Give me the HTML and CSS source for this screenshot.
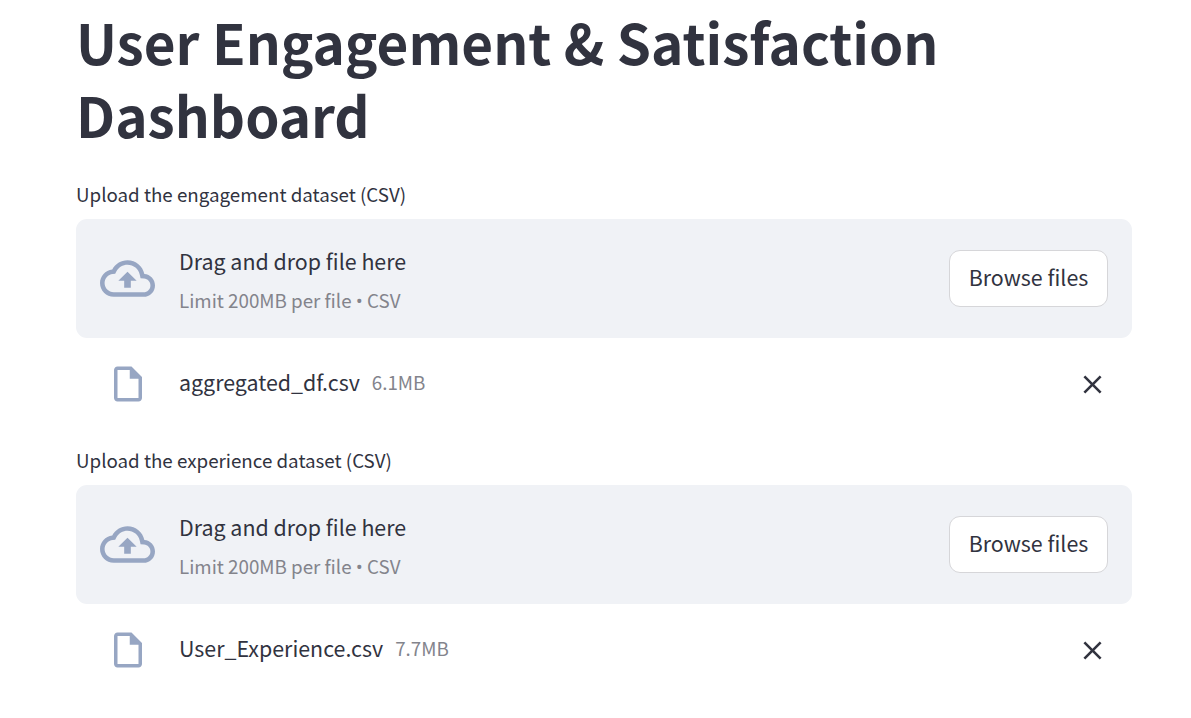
FILE: index.html
```html
<!DOCTYPE html>
<html lang="en">
<head>
  <meta charset="UTF-8">
  <title>User Engagement &amp; Satisfaction Dashboard</title>
  <link rel="stylesheet" href="styles.css">
</head>
<body>
  <main class="main">
    <h1 class="title">User Engagement &amp; Satisfaction Dashboard</h1>

    <section class="uploader">
      <label class="uploader-label">Upload the engagement dataset (CSV)</label>
      <div class="dropzone">
        <svg class="cloud-icon" viewBox="0 0 24 24"><path d="M19.35 10.04C18.67 6.59 15.64 4 12 4 9.11 4 6.6 5.64 5.35 8.04 2.34 8.36 0 10.91 0 14c0 3.31 2.69 6 6 6h13c2.76 0 5-2.24 5-5 0-2.64-2.05-4.78-4.65-4.96zM19 18H6c-2.21 0-4-1.79-4-4 0-2.05 1.53-3.76 3.56-3.97l1.07-.11.5-.95C8.08 7.14 9.94 6 12 6c2.62 0 4.88 1.86 5.39 4.43l.3 1.5 1.53.11c1.56.1 2.78 1.41 2.78 2.96 0 1.65-1.35 3-3 3zM8 13h2.55v3h2.9v-3H16l-4-4z"/></svg>
        <div class="drop-text">
          <span class="drop-title">Drag and drop file here</span>
          <small class="drop-limit">Limit 200MB per file <span class="bullet">•</span> CSV</small>
        </div>
        <button class="browse-btn">Browse files</button>
      </div>
      <div class="file-row">
        <svg class="file-icon" viewBox="0 0 24 24"><path d="M14 2H6c-1.1 0-1.99.9-1.99 2L4 20c0 1.1.89 2 1.99 2H18c1.1 0 2-.9 2-2V8l-6-6zM6 20V4h7v5h5v11H6z"/></svg>
        <span class="file-name">aggregated_df.csv</span>
        <small class="file-size">6.1MB</small>
        <svg class="close-icon" viewBox="0 0 24 24"><path d="M19 6.41L17.59 5 12 10.59 6.41 5 5 6.41 10.59 12 5 17.59 6.41 19 12 13.41 17.59 19 19 17.59 13.41 12z"/></svg>
      </div>
    </section>

    <section class="uploader">
      <label class="uploader-label">Upload the experience dataset (CSV)</label>
      <div class="dropzone">
        <svg class="cloud-icon" viewBox="0 0 24 24"><path d="M19.35 10.04C18.67 6.59 15.64 4 12 4 9.11 4 6.6 5.64 5.35 8.04 2.34 8.36 0 10.91 0 14c0 3.31 2.69 6 6 6h13c2.76 0 5-2.24 5-5 0-2.64-2.05-4.78-4.65-4.96zM19 18H6c-2.21 0-4-1.79-4-4 0-2.05 1.53-3.76 3.56-3.97l1.07-.11.5-.95C8.08 7.14 9.94 6 12 6c2.62 0 4.88 1.86 5.39 4.43l.3 1.5 1.53.11c1.56.1 2.78 1.41 2.78 2.96 0 1.65-1.35 3-3 3zM8 13h2.55v3h2.9v-3H16l-4-4z"/></svg>
        <div class="drop-text">
          <span class="drop-title">Drag and drop file here</span>
          <small class="drop-limit">Limit 200MB per file <span class="bullet">•</span> CSV</small>
        </div>
        <button class="browse-btn">Browse files</button>
      </div>
      <div class="file-row">
        <svg class="file-icon" viewBox="0 0 24 24"><path d="M14 2H6c-1.1 0-1.99.9-1.99 2L4 20c0 1.1.89 2 1.99 2H18c1.1 0 2-.9 2-2V8l-6-6zM6 20V4h7v5h5v11H6z"/></svg>
        <span class="file-name">User_Experience.csv</span>
        <small class="file-size">7.7MB</small>
        <svg class="close-icon" viewBox="0 0 24 24"><path d="M19 6.41L17.59 5 12 10.59 6.41 5 5 6.41 10.59 12 5 17.59 6.41 19 12 13.41 17.59 19 19 17.59 13.41 12z"/></svg>
      </div>
    </section>
  </main>
</body>
</html>
```

FILE: styles.css
```css
body {
  margin: 0;
  font-family: "Noto Sans CJK SC", "Open Sans", sans-serif;
  background-color: #fff;
  color: #31333f;
}
.main {
  padding: 5px 59px 0 76px;
}
.title {
  margin: 0 0 30px;
  font-size: 54.85px;
  line-height: 73px;
  font-weight: 700;
}
.uploader {
  margin-bottom: 17.4px;
}
.uploader-label {
  display: block;
  font-size: 18.75px;
  line-height: 26px;
  margin-bottom: 12px;
}
.dropzone {
  display: flex;
  align-items: center;
  height: 119px;
  padding: 0 24px;
  background-color: #f0f2f6;
  border-radius: 11px;
}
.cloud-icon {
  width: 55px;
  height: 55px;
  fill: #97a6c3;
  margin-right: 24px;
}
.drop-text {
  display: flex;
  flex-direction: column;
  gap: 11px;
  flex: 1;
  padding-top: 2px;
}
.drop-title {
  font-size: 21.4px;
  line-height: 30px;
}
.drop-limit {
  font-size: 18.75px;
  line-height: 26px;
  color: #83848c;
}
.bullet {
  font-family: "Open Sans", sans-serif;
}
.browse-btn {
  width: 159px;
  height: 57px;
  padding: 0 0 4px;
  font-family: inherit;
  font-size: 21.4px;
  color: #31333f;
  background-color: #fff;
  border: 1px solid #d6d6d9;
  border-radius: 11px;
}
.file-row {
  display: flex;
  align-items: center;
  height: 92px;
}
.file-icon {
  width: 42px;
  height: 42px;
  fill: #97a6c3;
  margin-left: 31px;
  margin-right: 30px;
}
.file-name {
  font-size: 21.4px;
  margin-right: 12px;
  padding-bottom: 5px;
}
.file-size {
  font-size: 18.75px;
  color: #83848c;
  flex: 1;
  padding-bottom: 5px;
}
.close-icon {
  width: 31px;
  height: 31px;
  fill: #31333f;
  margin-right: 24px;
}
```
